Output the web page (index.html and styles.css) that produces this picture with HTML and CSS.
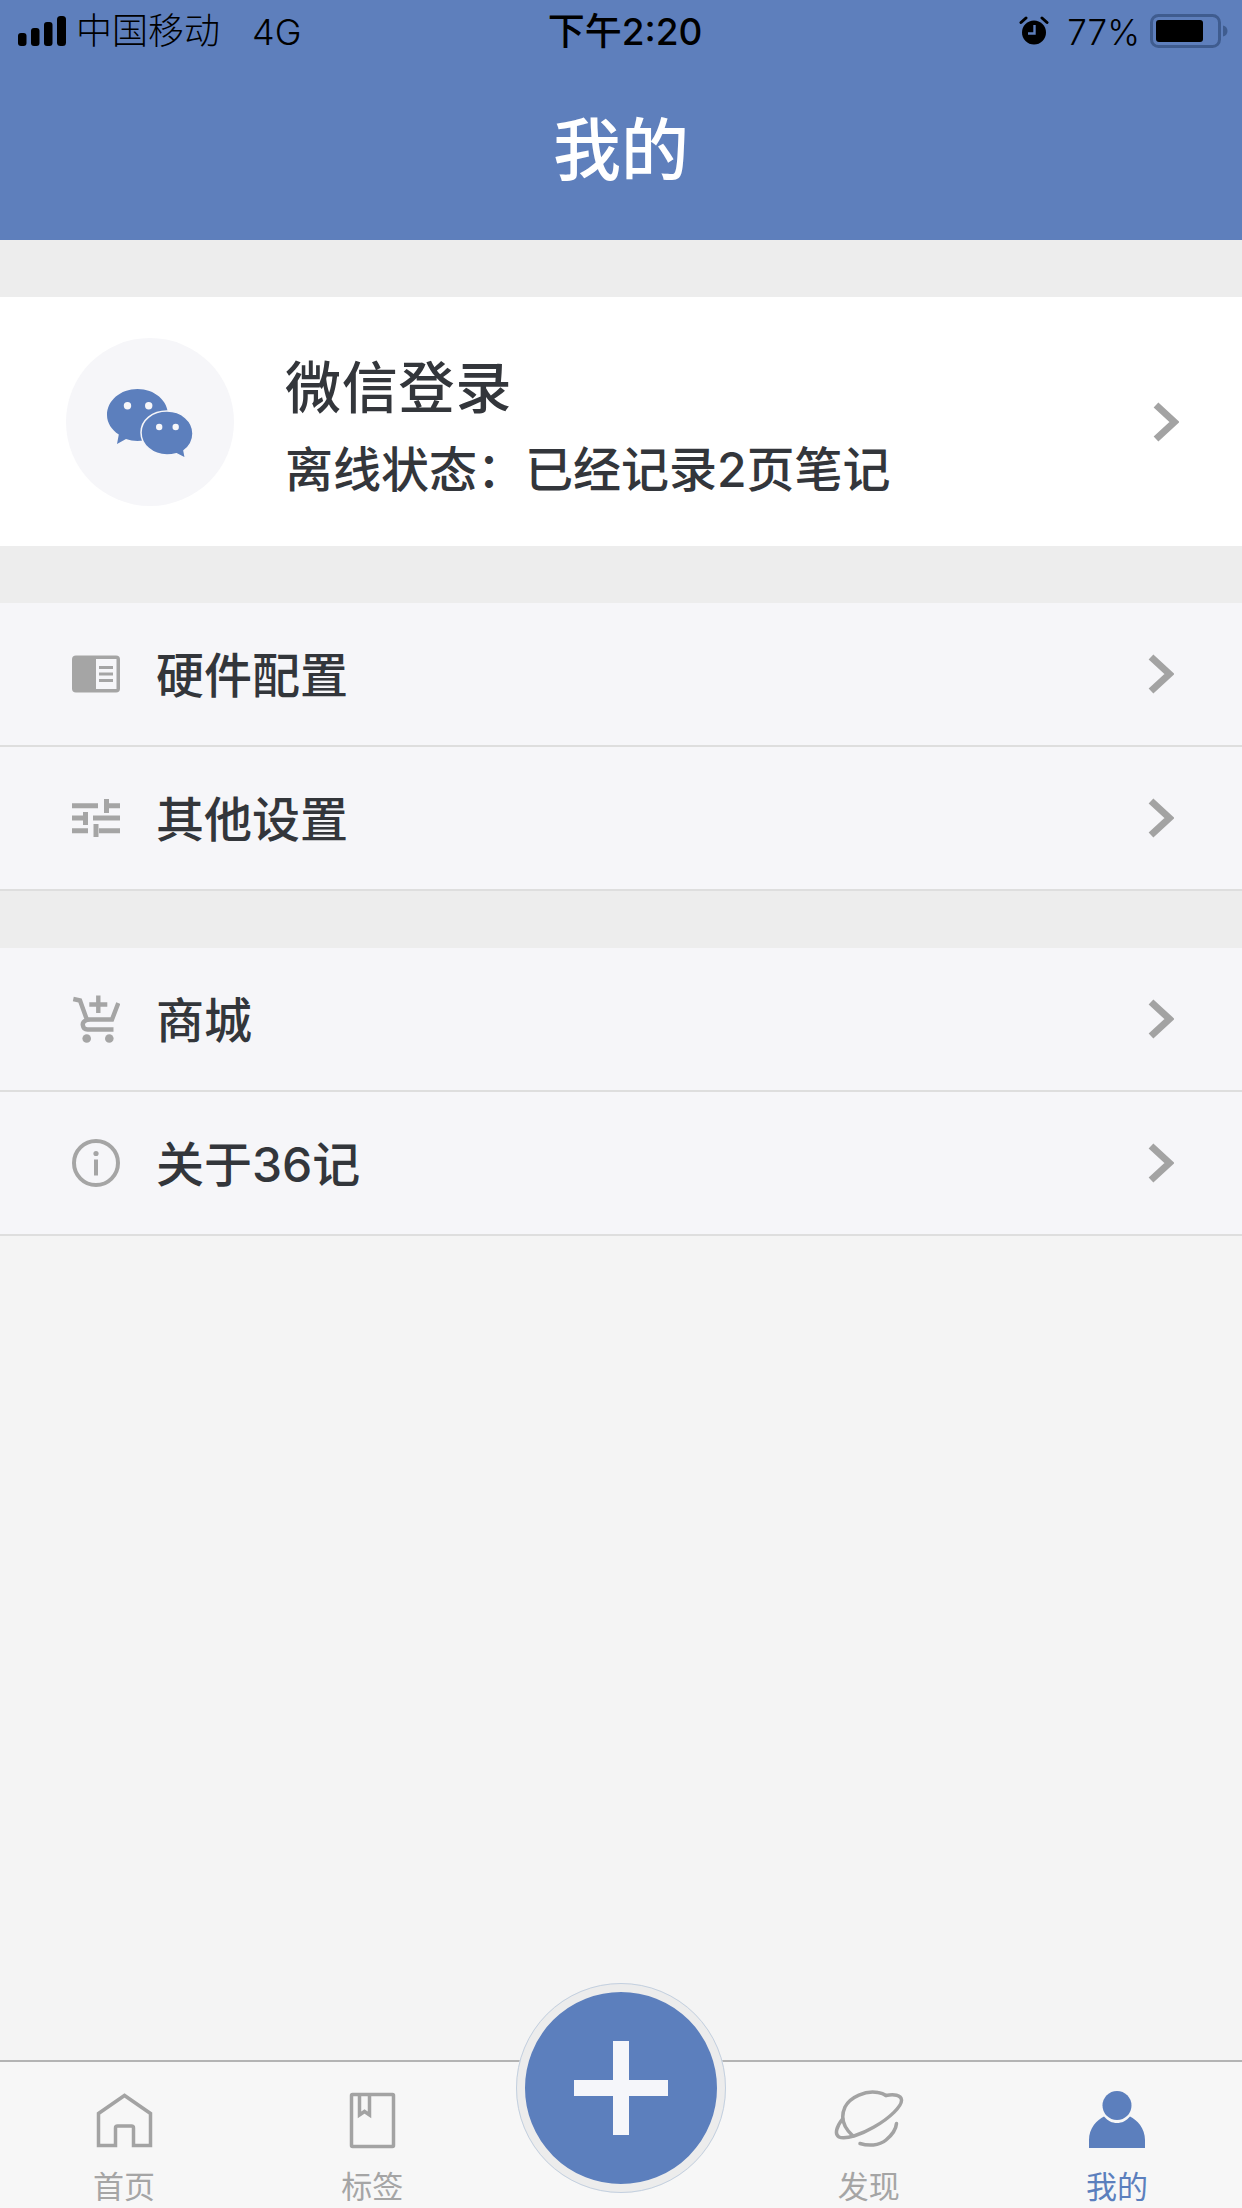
FILE: index.html
```html
<!DOCTYPE html>
<html lang="zh-CN">
<head>
<meta charset="utf-8">
<title>我的</title>
<link rel="stylesheet" href="styles.css">
</head>
<body>
<div class="page">
  <header class="header">
    <div class="status">
      <div class="status-left">
        <svg class="signal" viewBox="0 0 48 30"><rect x="0" y="17" width="8.5" height="13" rx="3"/><rect x="13" y="12" width="8.5" height="18" rx="3"/><rect x="26" y="6" width="8.5" height="24" rx="3"/><rect x="39" y="0" width="9" height="30" rx="3.5"/></svg>
        <span class="carrier">中国移动</span>
        <span class="net">4G</span>
      </div>
      <div class="time">下午2:20</div>
      <div class="status-right">
        <svg class="alarm" viewBox="0 0 30 30"><circle cx="15" cy="16.5" r="12"/><path d="M2 6.5 7 2M28 6.5 23 2" stroke="#000" stroke-width="3" stroke-linecap="round" fill="none"/><path d="M15.5 9v8.5H9" stroke="#5e7fbc" stroke-width="2.4" fill="none"/></svg>
        <span class="pct">77%</span>
        <svg class="battery" viewBox="0 0 78 34"><rect x="1.5" y="1.5" width="68" height="31" rx="7" fill="none" stroke="#3f5c8f" stroke-width="3"/><rect x="6" y="6" width="47" height="22" rx="3"/><path d="M73 11.5c3 .8 4.5 3 4.5 5.500s-1.500 4.700-4.500 5.500z" fill="#3f5c8f"/></svg>
      </div>
    </div>
    <h1 class="title">我的</h1>
  </header>

  <main class="main">
    <a class="login">
      <div class="avatar">
        <svg class="wechat" viewBox="100 380 100 80">
          <path class="bubble" d="M137.500 387c17 0 30.500 11.500 30.500 26s-13.500 26-30.500 26c-4 0-8-.7-11.500-1.900L117 442l1.800-9.500C111.500 427.800 107 420.800 107 413c0-14.500 13.500-26 30.500-26z"/>
          <path class="bubble inner" d="M167 409c14.500 0 26 10 26 22.500 0 7-3.500 13-9 17.200l1.500 7.800-9-4.800c-3 .8-6.200 1.300-9.500 1.300-14.500 0-26-10-26-22.500S152.500 409 167 409z"/>
          <circle class="eye" cx="127.500" cy="403.700" r="3.700"/><circle class="eye" cx="148.700" cy="403.700" r="3.700"/>
          <circle class="eye" cx="159.200" cy="425" r="3.200"/><circle class="eye" cx="175.700" cy="425" r="3.200"/>
        </svg>
      </div>
      <div class="login-text">
        <div class="login-title">微信登录</div>
        <div class="login-sub">离线状态：已经记录2页笔记</div>
      </div>
      <svg class="chevron chevron-login" viewBox="0 0 26 40"><path d="M3 3 21.500 20 3 37"/></svg>
    </a>

    <section class="group">
      <a class="row">
        <svg class="row-icon" viewBox="0 0 48 48"><rect x="0" y="5.500" width="48" height="37" rx="4" fill="#a5a5a5"/><rect x="24" y="9" width="20.500" height="30" fill="#f6f6f9"/><path d="M27 17.500h14M27 24h14M27 30.500h14" stroke="#a5a5a5" stroke-width="3"/></svg>
        <span class="row-label">硬件配置</span>
        <svg class="chevron" viewBox="0 0 26 40"><path d="M3 3 21.500 20 3 37"/></svg>
      </a>
      <a class="row">
        <svg class="row-icon" viewBox="0 0 48 48"><path d="M0 11.700h26M35 11.700h13M0 24h11M21 24h27M0 36.700h16M27 36.700h21" stroke="#a5a5a5" stroke-width="5" fill="none"/><path d="M34.500 5v14M13.500 18v13M24 30v13" stroke="#a5a5a5" stroke-width="5" fill="none"/></svg>
        <span class="row-label">其他设置</span>
        <svg class="chevron" viewBox="0 0 26 40"><path d="M3 3 21.500 20 3 37"/></svg>
      </a>
    </section>

    <section class="group">
      <a class="row">
        <svg class="row-icon" viewBox="0 0 48 48"><g fill="none" stroke="#a5a5a5" stroke-width="4.400"><path d="M1.300 4 8 5.500l7 19.500c-3 1-4.500 3-4.200 5 .3 2.500 2 4.500 4.700 4.500h26"/><path d="M15 24.500h25L46.300 8"/><path d="M26.300 .5v17.500M17.300 9.500h18"/></g><circle cx="14.700" cy="43.500" r="4.300" fill="#a5a5a5"/><circle cx="37.300" cy="43.500" r="4.300" fill="#a5a5a5"/></svg>
        <span class="row-label">商城</span>
        <svg class="chevron" viewBox="0 0 26 40"><path d="M3 3 21.500 20 3 37"/></svg>
      </a>
      <a class="row">
        <svg class="row-icon" viewBox="0 0 48 48"><circle cx="24" cy="24" r="22" fill="none" stroke="#a5a5a5" stroke-width="4"/><circle cx="24" cy="14.500" r="2.600" fill="#a5a5a5"/><path d="M24 20.500v16" stroke="#a5a5a5" stroke-width="4"/></svg>
        <span class="row-label">关于36记</span>
        <svg class="chevron" viewBox="0 0 26 40"><path d="M3 3 21.500 20 3 37"/></svg>
      </a>
    </section>
  </main>

  <nav class="tabbar">
    <a class="tab">
      <svg class="tab-icon" viewBox="0 0 60 60"><path class="line" d="M21.500 55.500H4.500V23.500L30.500 5.500 56.500 23.500V55.500H39.500V38a2 2 0 0 0-2-2h-14a2 2 0 0 0-2 2z"/></svg>
      <span class="tab-label">首页</span>
    </a>
    <a class="tab">
      <svg class="tab-icon" viewBox="0 0 60 60"><path class="line" d="M10.500 4.500h40a1 1 0 0 1 1 1v50a1 1 0 0 1-1 1h-40a1 1 0 0 1-1-1v-50a1 1 0 0 1 1-1z"/><path class="line" d="M17.500 4.500V25l5-3.500 5 3.500V4.500"/></svg>
      <span class="tab-label">标签</span>
    </a>
    <div class="tab tab-spacer"></div>
    <a class="tab">
      <svg class="tab-icon planet" viewBox="0 0 70 60"><path class="line round" d="M52 5.500C60 4 67 5 67.500 10 68 16 56 28 40 37 28 44 12 50 5 47 0 44 3 36 8.500 29"/><path class="line round" d="M19 46C10 38 6 28 11 17 16 7 32 0 44 2.500 48 3 50 4 52 5.500"/><path class="line round" d="M26 53.500C34 56 45 56 52 50 58 45 62 40 62.500 33.500"/></svg>
      <span class="tab-label">发现</span>
    </a>
    <a class="tab tab-active">
      <svg class="tab-icon" viewBox="0 0 60 60"><circle cx="30" cy="15.500" r="14.500"/><path d="M2 58V50C2 38 10 30 17 26.500 21 31 25 33 30 33 35 33 39 31 43 26.500 50 30 58 38 58 50V58z"/></svg>
      <span class="tab-label">我的</span>
    </a>
  </nav>

  <button class="fab" type="button" aria-label="添加"><span class="plus"></span></button>
</div>
</body>
</html>
```
FILE: styles.css
```css
* { box-sizing: border-box; }
html, body { margin: 0; padding: 0; }
body {
  font-family: Inter, "Noto Sans CJK SC", sans-serif;
  color: #33363b;
  background: #f4f4f4;
}
.page {
  position: relative;
  width: 1242px;
  height: 2208px;
  display: flex;
  flex-direction: column;
  overflow: hidden;
}
.header {
  height: 240px;
  background: #5e7fbc;
  display: flex;
  flex-direction: column;
  flex: none;
}
.status {
  height: 60px;
  display: grid;
  grid-template-columns: 1fr auto 1fr;
  align-items: center;
  color: #000;
  font-size: 35px;
  padding: 0 14px 0 18px;
}
.status-left, .status-right { display: flex; align-items: center; }
.status-right { justify-content: flex-end; }
.signal { width: 48px; height: 30px; fill: #000; }
.carrier { margin-left: 10px; font-size: 36px; font-weight: 300; line-height: 60px; }
.net { margin-left: 32px; font-size: 36px; font-weight: 300; line-height: 60px; padding-top: 2px; }
.time { font-size: 37px; font-weight: 500; line-height: 60px; margin-left: 4px; padding-top: 2px; }
.alarm { width: 30px; height: 30px; fill: #000; margin-right: 1px; }
.pct { margin-left: 17px; margin-right: 10px; font-size: 35px; font-weight: 300; line-height: 60px; padding-top: 2px; }
.battery { width: 78px; height: 34px; fill: #000; }
.title {
  margin: 0;
  flex: 1;
  display: flex;
  align-items: center;
  justify-content: center;
  color: #fff;
  font-size: 68px;
  font-weight: 500;
  padding-bottom: 10px;
}
.main { flex: 1; display: flex; flex-direction: column; }
.login {
  height: 306px;
  border-top: 57px solid #ededed;
  background: #fff;
  display: flex;
  align-items: center;
  padding: 0 63px 0 66px;
}
.avatar {
  width: 168px;
  height: 168px;
  border-radius: 50%;
  background: #f6f6f9;
  display: flex;
  align-items: center;
  justify-content: center;
  flex: none;
}
.wechat { width: 100px; height: 80px; }
.bubble { fill: #5c7fbd; }
.bubble.inner { stroke: #f6f6f9; stroke-width: 1.500; }
.eye { fill: #f6f6f9; }
.login-text { flex: 1; margin-left: 51px; padding-top: 10px; }
.login-title { font-size: 56px; letter-spacing: 0.8px; line-height: 70px; font-weight: 500; }
.login-sub { font-size: 48px; line-height: 60px; margin-top: 17px; font-weight: 500; }
.chevron { width: 26px; height: 40px; flex: none; fill: none; stroke: #a3a3a3; stroke-width: 7; }
.group { border-top: 57px solid #ededed; display: flex; flex-direction: column; }
.row {
  height: 144px;
  background: #f6f6f9;
  border-bottom: 2px solid #dedede;
  display: flex;
  align-items: center;
  padding: 0 68px 0 72px;
}
.row-icon { width: 48px; height: 48px; flex: none; }
.row-label { flex: 1; margin-left: 36px; font-size: 48px; font-weight: 500; padding-bottom: 5px; }
.tabbar {
  height: 148px;
  flex: none;
  background: #f7f7f7;
  border-top: 2px solid #b4b4b4;
  display: flex;
  padding-right: 1px;
}
.tab {
  flex: 1;
  display: flex;
  flex-direction: column;
  align-items: center;
  padding-top: 28px;
  color: #a5a5a5;
}
.tab-icon { width: 60px; height: 60px; fill: #5c7fbd; display: block; }
.tab-icon.planet { width: 70px; }
.line { fill: none; stroke: #a3a3a3; stroke-width: 3.500; }
.line.round { stroke-linecap: round; }
.tab-label { font-size: 31px; line-height: 40px; margin-top: 17px; font-weight: 400; }
.tab-active { color: #5c7fbd; }
.fab {
  position: absolute;
  left: 516px;
  top: 1983px;
  width: 210px;
  height: 210px;
  border-radius: 50%;
  background: #5c7fbd;
  border: 9px solid #ececec;
  outline: 1px solid #c3d0e0;
  outline-offset: -1px;
  padding: 0;
  display: flex;
  align-items: center;
  justify-content: center;
}
.plus { position: relative; width: 94px; height: 94px; display: block; }
.plus::before, .plus::after { content: ""; position: absolute; background: #f5f6fa; }
.plus::before { left: 0; right: 0; top: 39px; height: 16px; }
.plus::after { top: 0; bottom: 0; left: 39px; width: 16px; }
```
